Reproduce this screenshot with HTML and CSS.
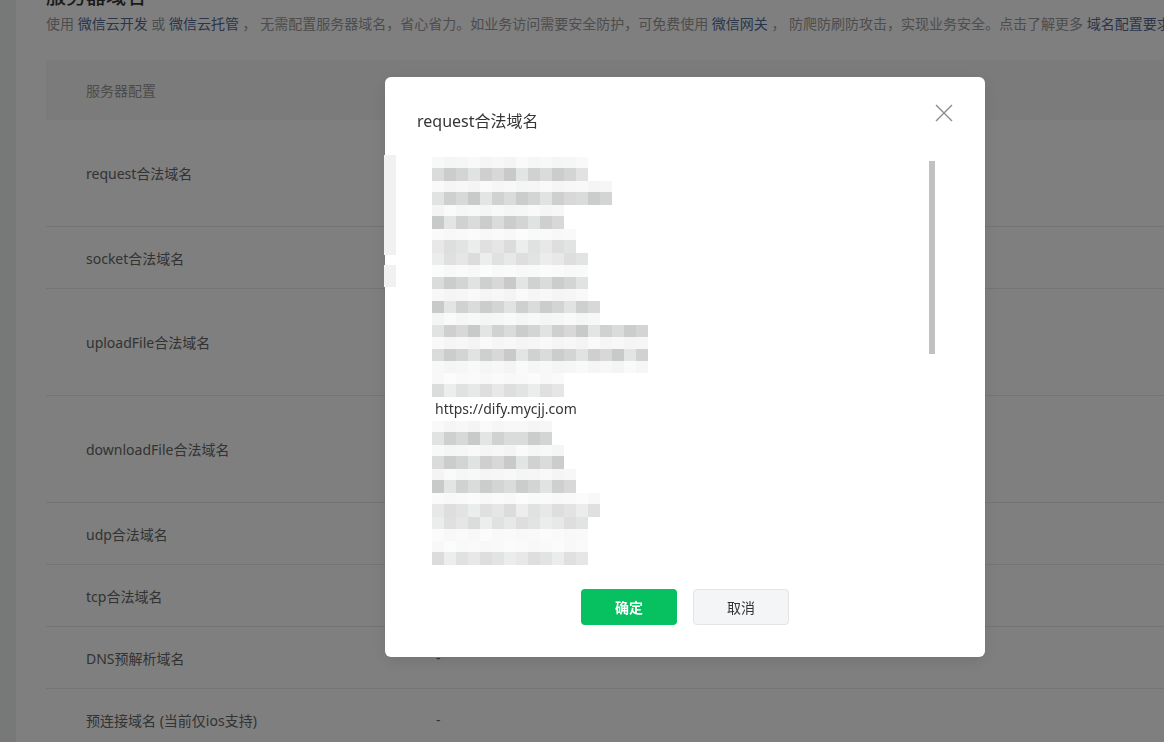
FILE: index.html
```html
<!DOCTYPE html>
<html lang="zh-CN">

<head>
    <meta charset="UTF-8" />
    <meta name="viewport" content="width=device-width, initial-scale=1.0" />
    <title>开发管理 - 服务器域名</title>
    <link rel="stylesheet" href="styles.css">
</head>

<body>
    <div class="side-edge"></div>

    <div class="main">
        <h2 class="section-title">服务器域名</h2>
        <p class="desc">
            使用 <a href="#">微信云开发</a> 或 <a href="#">微信云托管</a> ， 无需配置服务器域名，省心省力。如业务访问需要安全防护，可免费使用 <a href="#">微信网关</a> ， 防爬防刷防攻击，实现业务安全。点击了解更多 <a href="#">域名配置要求</a>
        </p>

        <div class="domain-table">
            <div class="row head">
                <div class="cell label">服务器配置</div>
                <div class="cell value"></div>
            </div>
            <div class="row tall">
                <div class="cell label">request合法域名</div>
                <div class="cell value"></div>
            </div>
            <div class="row">
                <div class="cell label">socket合法域名</div>
                <div class="cell value"></div>
            </div>
            <div class="row tall">
                <div class="cell label">uploadFile合法域名</div>
                <div class="cell value"></div>
            </div>
            <div class="row tall">
                <div class="cell label">downloadFile合法域名</div>
                <div class="cell value"></div>
            </div>
            <div class="row">
                <div class="cell label">udp合法域名</div>
                <div class="cell value"></div>
            </div>
            <div class="row">
                <div class="cell label">tcp合法域名</div>
                <div class="cell value"></div>
            </div>
            <div class="row">
                <div class="cell label">DNS预解析域名</div>
                <div class="cell value">-</div>
            </div>
            <div class="row">
                <div class="cell label">预连接域名 (当前仅ios支持)</div>
                <div class="cell value">-</div>
            </div>
        </div>
    </div>

    <!-- dialog -->
    <div class="mask"></div>
    <div class="dialog">
        <div class="smudge s-a"></div>
        <div class="smudge s-b"></div>

        <div class="dialog-head">
            <h3>request合法域名</h3>
            <a class="close" href="#">
                <svg width="18" height="18" viewBox="0 0 18 18">
                    <path d="M1 1L17 17M17 1L1 17" stroke="#8c8c8c" stroke-width="1.4" fill="none" />
                </svg>
            </a>
        </div>

        <div class="list-box">
            <div class="list">
                <div class="blur w13"></div>
                <div class="blur w15 s2"></div>
                <div class="blur w11 s3"></div>
                <div class="blur w12 soft"></div>
                <div class="blur w13 top soft s2"></div>
                <div class="blur w13 top"></div>
                <div class="blur w14 top s3"></div>
                <div class="blur w18 top s2"></div>
                <div class="blur w18 top"></div>
                <div class="blur w11 soft s3"></div>
                <div class="domain">https://dify.mycjj.com</div>
                <div class="blur w10 s2"></div>
                <div class="blur w11"></div>
                <div class="blur w12 s3"></div>
                <div class="blur w14 soft"></div>
                <div class="blur w13 top soft s2"></div>
                <div class="blur w13 soft s3"></div>
                <div class="blur w15"></div>
                <div class="blur w12 s2"></div>
                <div class="blur w14 s3"></div>
            </div>
            <div class="scroll-track">
                <div class="thumb"></div>
            </div>
        </div>

        <div class="dialog-foot">
            <button class="btn btn-primary">确定</button>
            <button class="btn btn-default">取消</button>
        </div>
    </div>
</body>

</html>
```

FILE: styles.css
```css
body {
    margin: 0;
    font-family: "Noto Sans", "Noto Sans CJK SC", sans-serif;
    font-size: 14px;
    color: #353535;
    background-color: #fff;
    display: flex;
    height: 742px;
    overflow: hidden;
}

.side-edge {
    width: 16px;
    flex-shrink: 0;
    background-color: #eff0f0;
}

.main {
    padding-left: 30px;
    flex-shrink: 0;
    width: 1400px;
}

.section-title {
    font-size: 20px;
    font-weight: 500;
    line-height: 28px;
    margin: -17px 0 0 0;
}

.desc {
    margin: 2px 0 0 0;
    line-height: 22px;
    color: #9a9a9a;
    white-space: nowrap;
}

.desc a {
    color: #576b95;
    text-decoration: none;
}

.domain-table {
    margin-top: 25px;
}

.row {
    display: flex;
    align-items: center;
    height: 61px;
    border-bottom: 1px solid #e9e9e9;
    color: #666;
}

.row.tall {
    height: 106px;
}

.row.head {
    height: 60px;
    background-color: #f6f7f7;
    border-bottom: none;
}

.row.head .label {
    color: #999;
}

.cell {
    padding-left: 40px;
    box-sizing: border-box;
}

.cell.label {
    width: 350px;
}

/* dialog */

.mask {
    position: fixed;
    inset: 0;
    background: rgba(0, 0, 0, 0.5);
}

.dialog {
    position: fixed;
    left: 385px;
    top: 77px;
    width: 600px;
    height: 580px;
    box-sizing: border-box;
    padding: 32px;
    background: #fff;
    border-radius: 6px;
    box-shadow: 0 4px 16px rgba(0, 0, 0, 0.1);
}

.smudge {
    position: absolute;
    left: -1px;
    width: 12px;
    background: #f1f1f1;
}

.s-a {
    top: 78px;
    height: 100px;
}

.s-b {
    top: 188px;
    height: 22px;
}

.dialog-head {
    display: flex;
    justify-content: space-between;
    align-items: flex-start;
}

.dialog-head h3 {
    margin: 0;
    font-size: 16px;
    font-weight: normal;
    line-height: 24px;
}

.close {
    display: block;
    width: 18px;
    height: 18px;
    margin-top: -5px;
}

.close svg {
    display: block;
}

.list-box {
    display: flex;
    height: 408px;
    margin-top: 24px;
    padding-left: 15px;
}

.list {
    flex: 1;
    overflow: hidden;
}

.domain {
    height: 24px;
    line-height: 24px;
    padding-left: 3px;
}

.blur {
    --cells: repeating-linear-gradient(90deg,
            #dadbdb 0 12px, #cbcccc 12px 24px, #d3d4d4 24px 36px, #e1e2e2 36px 48px,
            #cecfcf 48px 60px, #d8d8d8 60px 72px, #c8c9c9 72px 84px, #e3e4e4 84px 96px,
            #d0d1d1 96px 108px);
    --veil: linear-gradient(rgba(255, 255, 255, 0.8) 0 11px, transparent 11px);
    height: 24px;
    background-image: var(--veil), var(--cells);
}

.blur.top {
    --veil: linear-gradient(transparent 0 12px, rgba(255, 255, 255, 0.8) 12px);
}

.blur.soft {
    background-image: linear-gradient(rgba(255, 255, 255, 0.35), rgba(255, 255, 255, 0.35)), var(--veil), var(--cells);
}

.blur.s2 {
    background-position: 0 0, -36px 0;
}

.blur.s3 {
    background-position: 0 0, -72px 0;
}

.blur.soft.s2 {
    background-position: 0 0, 0 0, -36px 0;
}

.blur.soft.s3 {
    background-position: 0 0, 0 0, -72px 0;
}

.w10 { width: 120px; }
.w11 { width: 132px; }
.w12 { width: 144px; }
.w13 { width: 156px; }
.w14 { width: 168px; }
.w15 { width: 180px; }
.w18 { width: 216px; }

.scroll-track {
    width: 6px;
    margin-left: 10px;
    margin-right: 18px;
    padding-top: 4px;
}

.thumb {
    height: 193px;
    background: #c1c1c1;
}

.dialog-foot {
    display: flex;
    justify-content: center;
    gap: 16px;
    margin-top: 24px;
}

.btn {
    width: 96px;
    height: 36px;
    border-radius: 4px;
    font-family: inherit;
    font-size: 14px;
    cursor: pointer;
}

.btn-primary {
    background-color: #07c160;
    border: none;
    color: #fff;
    font-weight: 600;
}

.btn-default {
    background-color: #f4f5f6;
    border: 1px solid #e3e4e5;
    color: #353535;
}
```
